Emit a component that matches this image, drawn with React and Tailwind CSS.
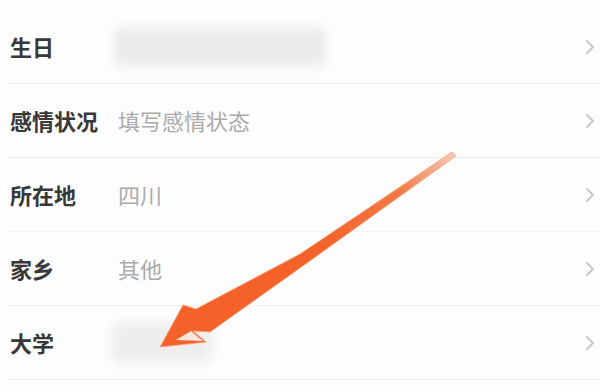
import React from "react";

const Chevron = () => (
  <svg width="10" height="16" viewBox="0 0 10 16" className="shrink-0">
    <path d="M2 2 L8 8 L2 14" fill="none" stroke="#c6c6c6" strokeWidth="1.8" strokeLinecap="round" strokeLinejoin="round" />
  </svg>
);

function Row({ label, children, border = "border-[#ececec]" }) {
  return (
    <div className={`ml-[8px] h-[74px] flex items-center border-b ${border}`}>
      <div className="w-[110px] pl-[2px] text-[22px] font-semibold text-[#383838]">{label}</div>
      <div className="flex-1 flex items-center text-[22px] text-[#ababab]">{children}</div>
      <div className="pr-[5px]"><Chevron /></div>
    </div>
  );
}

export default function App() {
  return (
    <div
      className="relative w-[600px] h-[392px] overflow-hidden bg-[#fdfdfd]"
      style={{ fontFamily: '"Noto Sans CJK SC", "Noto Sans", sans-serif' }}
    >
      <div className="pt-[10px]">
        <Row label="生日">
          <div className="w-[212px] h-[38px] ml-[-4px] rounded-md bg-[#ebebeb] blur-[5px]" />
        </Row>
        <Row label="感情状况">填写感情状态</Row>
        <Row label="所在地" border="border-[#f4f4f4]">四川</Row>
        <Row label="家乡">其他</Row>
        <Row label="大学">
          <div className="w-[100px] h-[40px] ml-[-6px] rounded-md bg-[#eeeeee] blur-[5px]" />
        </Row>
      </div>
      <svg className="absolute left-0 top-0" width="600" height="392" viewBox="0 0 600 392">
        <defs>
          <linearGradient id="g" x1="452" y1="154" x2="320" y2="245" gradientUnits="userSpaceOnUse">
            <stop offset="0" stopColor="#f6c8b4" />
            <stop offset="0.4" stopColor="#f27a45" />
            <stop offset="1" stopColor="#f4622a" />
          </linearGradient>
        </defs>
        <polygon
          points="452,152 300,254 196,309 183,305 160,347 206,342 193,331 210,332 300,268 456,156"
          fill="url(#g)"
          stroke="#f6a27c"
          strokeWidth="0.8"
          strokeLinejoin="round"
        />
        <polygon points="176,340 203,341 191,331" fill="#fbe6dc" />
      </svg>
    </div>
  );
}
